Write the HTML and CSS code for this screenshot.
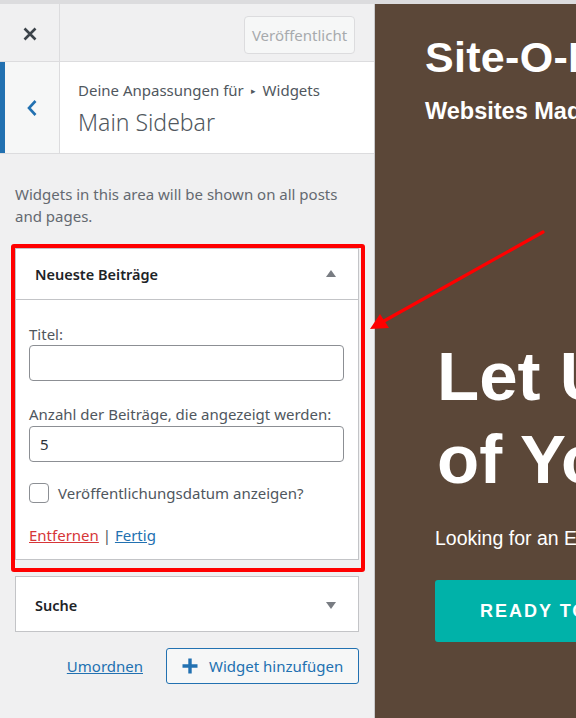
FILE: index.html
```html
<!DOCTYPE html>
<html lang="de">
<head>
<meta charset="utf-8">
<title>Customizer – Main Sidebar</title>
<link rel="stylesheet" href="styles.css">
</head>
<body>
<div class="topline"></div>
<div class="app">
  <aside class="sidebar">
    <header class="hdr">
      <button class="close" aria-label="Schließen">
        <svg width="14" height="14" viewBox="0 0 14 14"><path d="M1.5 1.5 L12.5 12.5 M12.5 1.5 L1.5 12.5" stroke="#3c434a" stroke-width="2.6" fill="none"/></svg>
      </button>
      <div class="hdr-actions">
        <button class="publish">Veröffentlicht</button>
      </div>
    </header>
    <div class="section-head">
      <button class="back" aria-label="Zurück">
        <svg width="12" height="18" viewBox="0 0 12 18"><path d="M9.5 2 L3 9 L9.5 16" stroke="#2271b1" stroke-width="2.6" fill="none"/></svg>
      </button>
      <div class="section-title">
        <span class="crumb">Deine Anpassungen für <span class="sep">▸</span> Widgets</span>
        <h3>Main Sidebar</h3>
      </div>
    </div>
    <div class="content">
      <p class="desc">Widgets in this area will be shown on all posts and pages.</p>
      <div class="widget">
        <div class="widget-top">
          <span class="widget-title">Neueste Beiträge</span>
          <span class="tri up"></span>
        </div>
        <div class="widget-form">
          <label class="lbl">Titel:</label>
          <input class="field" type="text" value="">
          <label class="lbl lbl2">Anzahl der Beiträge, die angezeigt werden:</label>
          <input class="field field2" type="text" value="5">
          <div class="check-row">
            <span class="checkbox"></span>
            <span class="check-lbl">Veröffentlichungsdatum anzeigen?</span>
          </div>
          <div class="links"><a class="remove">Entfernen</a> | <a class="done">Fertig</a></div>
        </div>
      </div>
      <div class="widget closed">
        <div class="widget-top">
          <span class="widget-title">Suche</span>
          <span class="tri down"></span>
        </div>
      </div>
      <div class="actions">
        <a class="reorder">Umordnen</a>
        <button class="add">
          <svg width="16" height="16" viewBox="0 0 16 16"><path d="M8 0.5 V15.5 M0.5 8 H15.5" stroke="#2271b1" stroke-width="3.4" fill="none"/></svg>
          <span>Widget hinzufügen</span>
        </button>
      </div>
    </div>
  </aside>
  <main class="preview">
    <div class="site-title">Site-O-Matic</div>
    <div class="site-tag">Websites Made Simple</div>
    <h1 class="hero-h">Let Us Take Care<br>of Your Website</h1>
    <p class="hero-p">Looking for an Easy Way to Get Online?</p>
    <a class="cta">READY TO GET STARTED?</a>
  </main>
</div>
<div class="annot-box"></div>
<svg class="annot-arrow" width="576" height="718" viewBox="0 0 576 718">
  <line x1="543" y1="232" x2="384" y2="321" stroke="#ff0000" stroke-width="3.2" stroke-linecap="round"/>
  <polygon points="370,329 380,314 389,328" fill="#ff0000"/>
</svg>
</body>
</html>
```
FILE: styles.css
```css
* { box-sizing: border-box; }
html, body { margin: 0; padding: 0; }
body {
  width: 576px;
  height: 718px;
  overflow: hidden;
  position: relative;
  background: #f0f0f1;
  font-family: "Noto Sans", "Open Sans", sans-serif;
  color: #50575e;
}
.topline { height: 4px; background: #dcdcde; }
.app { display: flex; height: 714px; }

/* sidebar */
.sidebar {
  width: 375px;
  flex: none;
  background: #f0f0f1;
  border-right: 1px solid #c9cacc;
  display: flex;
  flex-direction: column;
}
.hdr {
  height: 58px;
  display: flex;
  border-bottom: 1px solid #dcdcde;
}
.close {
  width: 60px;
  border: 0;
  border-right: 1px solid #dcdcde;
  background: transparent;
  display: flex;
  align-items: center;
  justify-content: center;
  padding: 2px 0 0 0;
}
.hdr-actions {
  flex: 1;
  display: flex;
  justify-content: flex-end;
  align-items: center;
  padding: 4px 19px 0 0;
}
.publish {
  width: 111px;
  height: 38px;
  border: 1px solid #dcdcde;
  border-radius: 4px;
  background: #f6f7f7;
  color: #a7aaad;
  font-family: inherit;
  font-size: 15px;
  padding: 0;
}
.section-head {
  height: 92px;
  display: flex;
  border-bottom: 1px solid #dcdcde;
  background: #fff;
}
.back {
  width: 60px;
  border: 0;
  border-left: 5px solid #2271b1;
  border-right: 1px solid #dcdcde;
  background: #f6f7f7;
  display: flex;
  align-items: center;
  justify-content: center;
  padding: 0;
}
.section-title {
  padding: 17px 0 0 18px;
  display: flex;
  flex-direction: column;
}
.crumb { font-size: 15px; line-height: 22px; color: #50575e; }
.sep { font-size: 9px; position: relative; top: -2px; margin: 0 3px; }
.section-title h3 {
  margin: 3px 0 0 0;
  font-size: 23px;
  line-height: 30px;
  font-weight: 300;
  color: #50575e;
}

.content { padding: 29px 0 0 15px; }
.desc {
  margin: 0;
  width: 345px;
  font-size: 15px;
  line-height: 22px;
  color: #646970;
}
.widget {
  width: 344px;
  margin-top: 21px;
  background: #fff;
  border: 1px solid #c3c4c7;
}
.widget.closed { margin-top: 16px; }
.widget-top {
  height: 51px;
  display: flex;
  align-items: center;
  justify-content: space-between;
  padding: 0 22px 0 19px;
  border-bottom: 1px solid #c3c4c7;
}
.widget.closed .widget-top { height: 54px; border-bottom: 0; padding-top: 2px; }
.widget-title { font-size: 14.5px; font-weight: 600; color: #1d2327; }
.tri { width: 0; height: 0; border-left: 5px solid transparent; border-right: 5px solid transparent; }
.tri.up { border-bottom: 7px solid #787c82; margin-top: -2px; }
.tri.down { border-top: 7px solid #787c82; }

.widget-form {
  padding: 24px 14px 14px 13px;
  display: flex;
  flex-direction: column;
}
.lbl { font-size: 15px; line-height: 20px; color: #50575e; }
.lbl2 { margin-top: 23px; }
.field {
  margin-top: 1px;
  width: 315px;
  height: 36px;
  border: 1px solid #8c8f94;
  border-radius: 4px;
  padding: 0 10px;
  font-family: inherit;
  font-size: 15px;
  color: #2c3338;
}
.field2 { margin-top: 2px; }
.check-row { margin-top: 21px; display: flex; align-items: center; }
.checkbox {
  width: 20px; height: 20px;
  border: 1px solid #8c8f94;
  border-radius: 4px;
  background: #fff;
}
.check-lbl { margin-left: 9px; font-size: 15px; color: #50575e; }
.links { margin-top: 22px; font-size: 15px; line-height: 20px; color: #50575e; }
.links a { text-decoration: underline; }
.remove { color: #d63638; }
.done { color: #2271b1; }

.actions {
  width: 344px;
  margin-top: 16px;
  display: flex;
  justify-content: flex-end;
  align-items: center;
  gap: 23px;
}
.reorder { color: #2271b1; font-size: 15px; text-decoration: underline; }
.add {
  width: 193px;
  height: 36px;
  border: 1px solid #2271b1;
  border-radius: 3px;
  background: #f6f7f7;
  color: #2271b1;
  font-family: inherit;
  font-size: 15px;
  display: flex;
  align-items: center;
  gap: 11px;
  padding: 0 0 0 15px;
}

/* preview */
.preview {
  flex: 1;
  background: #5b4738;
  overflow: hidden;
  white-space: nowrap;
  padding: 28px 0 0 50px;
  font-family: "Liberation Sans", Arial, sans-serif;
  color: #fff;
}
.site-title { font-size: 43px; font-weight: 700; line-height: 50px; letter-spacing: 0.3px; }
.site-tag { margin-top: 15px; font-size: 23.5px; font-weight: 700; line-height: 28px; }
.hero-h {
  margin: 210px 0 0 12px;
  font-size: 69px;
  line-height: 83px;
  font-weight: 700;
}
.hero-p { margin: 25px 0 0 10px; font-size: 19.5px; line-height: 24px; }
.cta {
  display: flex;
  align-items: center;
  margin: 30px 0 0 10px;
  height: 62px;
  width: 300px;
  background: #00b2a9;
  border-radius: 3px;
  padding-left: 45px;
  font-size: 18px;
  font-weight: 700;
  letter-spacing: 2px;
  color: #fff;
}

/* annotation */
.annot-box {
  position: absolute;
  left: 11px;
  top: 244px;
  width: 354px;
  height: 328px;
  border: 4px solid #ff0000;
  border-radius: 3px;
  pointer-events: none;
}
.annot-arrow { position: absolute; left: 0; top: 0; pointer-events: none; }
```
